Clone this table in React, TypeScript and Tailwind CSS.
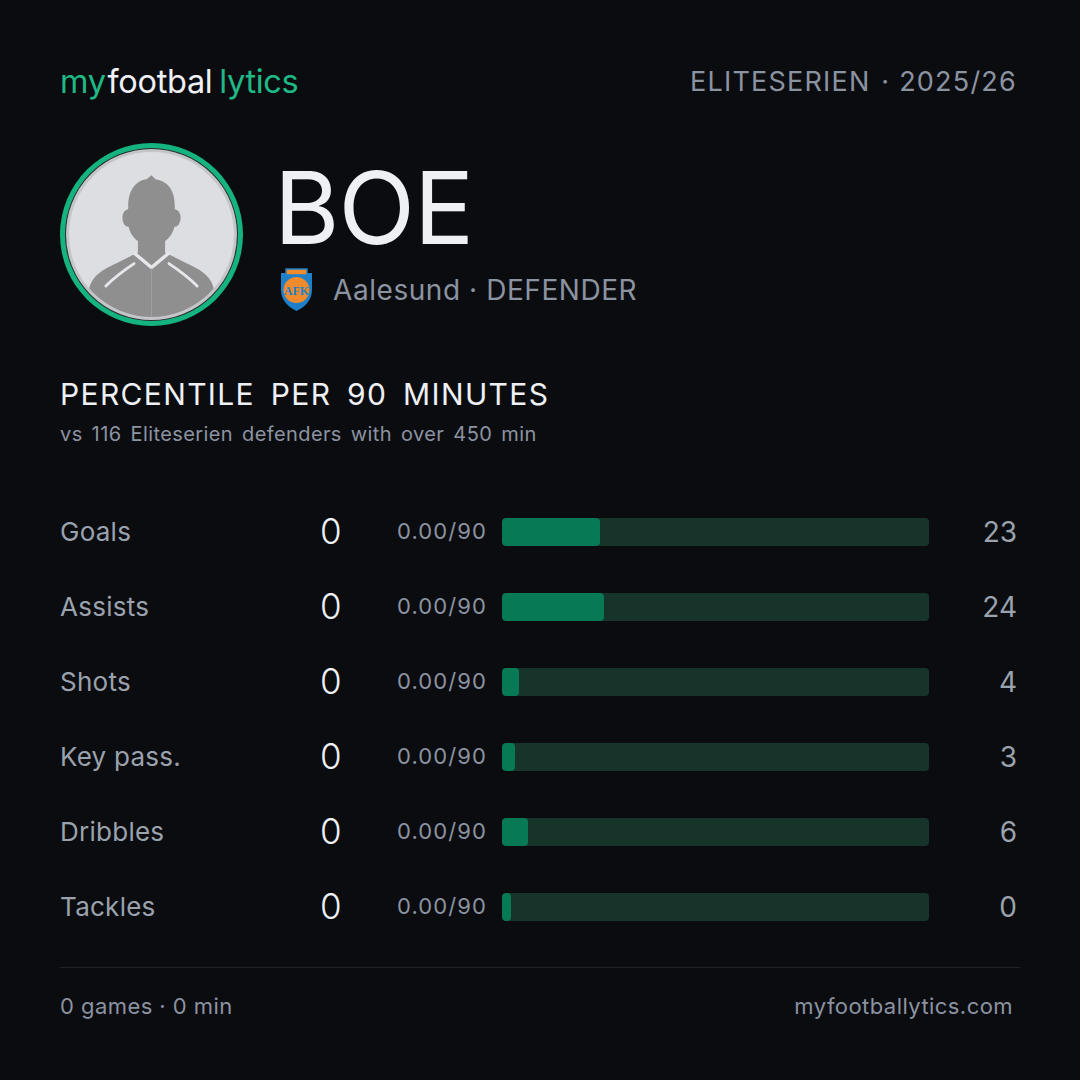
const stats = [
  { label: 'Goals', value: 0, per90: '0.00/90', pct: 23 },
  { label: 'Assists', value: 0, per90: '0.00/90', pct: 24 },
  { label: 'Shots', value: 0, per90: '0.00/90', pct: 4 },
  { label: 'Key pass.', value: 0, per90: '0.00/90', pct: 3 },
  { label: 'Dribbles', value: 0, per90: '0.00/90', pct: 6 },
  { label: 'Tackles', value: 0, per90: '0.00/90', pct: 0 },
];

function Silhouette() {
  return (
    <svg width="100%" height="100%" viewBox="0 0 170 170">
      {/* body */}
      <path
        d="M20 172 L20 148 C20 130 32 122 50 114 L70 104 L100 104 L120 114 C138 122 150 130 150 148 L150 172 Z"
        fill="#8f8f8f"
      />
      {/* neck */}
      <rect x="71" y="80" width="28" height="30" fill="#8f8f8f" />
      {/* ears */}
      <ellipse cx="61" cy="68" rx="6" ry="9" fill="#8f8f8f" />
      <ellipse cx="109" cy="68" rx="6" ry="9" fill="#8f8f8f" />
      {/* head */}
      <path
        d="M61 56 C61 38 70 29 80 28 L85 24 L89 28 C101 30 109 38 109 56 L109 72 C109 86 98 96 85 96 C72 96 61 86 61 72 Z"
        fill="#8f8f8f"
      />
      {/* collar */}
      <path d="M67 104 L85 119 L103 104" stroke="#e6e7ea" strokeWidth="3.5" fill="none" strokeLinejoin="round" />
      <path d="M38 138 C48 128 58 121 67 115" stroke="#e6e7ea" strokeWidth="3" fill="none" strokeLinecap="round" />
      <path d="M132 138 C122 128 112 121 103 115" stroke="#e6e7ea" strokeWidth="3" fill="none" strokeLinecap="round" />
      <path d="M85 120 L85 172" stroke="#a0a0a0" strokeWidth="1" />
    </svg>
  );
}

function ClubCrest() {
  return (
    <svg width="37" height="44" viewBox="0 0 37 44">
      <path d="M3 5 L34 5 L34 22 C34 32 27 39 18.5 43 C10 39 3 32 3 22 Z" fill="#1e80c8" />
      <rect x="8" y="1" width="21" height="6" fill="#f08b2d" stroke="#1e80c8" strokeWidth="1.5" />
      <circle cx="18.5" cy="22" r="13" fill="#f08b2d" />
      <text
        x="18.5"
        y="27"
        textAnchor="middle"
        fontSize="12"
        fontFamily="Liberation Serif, serif"
        fill="#1e80c8"
        fontWeight="bold"
      >
        AFK
      </text>
    </svg>
  );
}

export default function App() {
  return (
    <div
      className="w-[1080px] h-[1080px] bg-[#0b0c10] px-[60px] pt-[62px] flex flex-col text-[#eef0f4]"
      style={{ fontFamily: 'Inter, "Noto Sans", sans-serif' }}
    >
      {/* Header */}
      <div className="flex items-center justify-between h-[40px]">
        <div className="text-[32.5px] leading-[40px] tracking-[-0.01em] flex">
          <span className="text-[#1fb985]">my</span>
          <span className="text-[#eef0f4] ml-[2px]">footbal</span>
          <span className="text-[#1fb985] ml-[7px]">lytics</span>
        </div>
        <div className="text-[27px] leading-[40px] tracking-[0.045em] text-[#8b93a1] mr-[3px]">
          ELITESERIEN <span className="ml-[2px]">·</span> 2025/26
        </div>
      </div>

      {/* Player */}
      <div className="flex items-center mt-[41px]">
        <div className="w-[183px] h-[183px] rounded-full bg-[#14b37f] p-[5px]">
          <div className="w-full h-full rounded-full bg-[#2a2c30] p-[1px]">
            <div className="w-full h-full rounded-full bg-[#dcdee2] border-[3px] border-[#c4c5c8] overflow-hidden">
              <Silhouette />
            </div>
          </div>
        </div>
        <div className="ml-[35px] flex flex-col">
          <div className="text-[100px] leading-none tracking-[-0.01em] text-[#eef0f4] -ml-[4px]">BOE</div>
          <div className="flex items-center h-[44px] mt-[10px]">
            <ClubCrest />
            <span className="ml-[18px] text-[28px] tracking-[0.02em] text-[#8b93a1]">Aalesund · DEFENDER</span>
          </div>
        </div>
      </div>

      {/* Section title */}
      <div className="mt-[50px] text-[30px] leading-[36px] tracking-[0.045em] [word-spacing:6px] text-[#eef0f4]">
        PERCENTILE PER 90 MINUTES
      </div>
      <div className="mt-[8px] text-[20px] leading-[28px] tracking-[0.02em] [word-spacing:3px] text-[#8b93a1]">
        vs 116 Eliteserien defenders with over 450 min
      </div>

      {/* Stats */}
      <div className="mt-[46px] flex flex-col">
        {stats.map((s) => (
          <div key={s.label} className="h-[75px] flex items-center">
            <div className="w-[260px] text-[26px] tracking-[0.01em] text-[#9aa2ad]">{s.label}</div>
            <div className="w-[60px] text-[35px] font-light text-[#eef0f4]">{s.value}</div>
            <div className="w-[107px] text-right text-[22px] tracking-[0.05em] text-[#8b93a1]">{s.per90}</div>
            <div className="ml-[15px] w-[427px] h-[28px] rounded-[4px] bg-[#16342a] overflow-hidden flex">
              <div
                className="h-full rounded-[4px] bg-[#077955]"
                style={{ width: `${Math.max(s.pct, 2)}%` }}
              />
            </div>
            <div className="flex-1 text-right text-[28px] text-[#9aa2ad] pr-[3px]">{s.pct}</div>
          </div>
        ))}
      </div>

      {/* Footer */}
      <div className="mt-[23px] h-px bg-[#1f222a]" />
      <div className="mt-[24px] flex items-center justify-between text-[22px] leading-[28px] tracking-[0.02em] text-[#8b93a1]">
        <span>0 games · 0 min</span>
        <span className="mr-[7px]">myfootballytics.com</span>
      </div>
    </div>
  );
}
